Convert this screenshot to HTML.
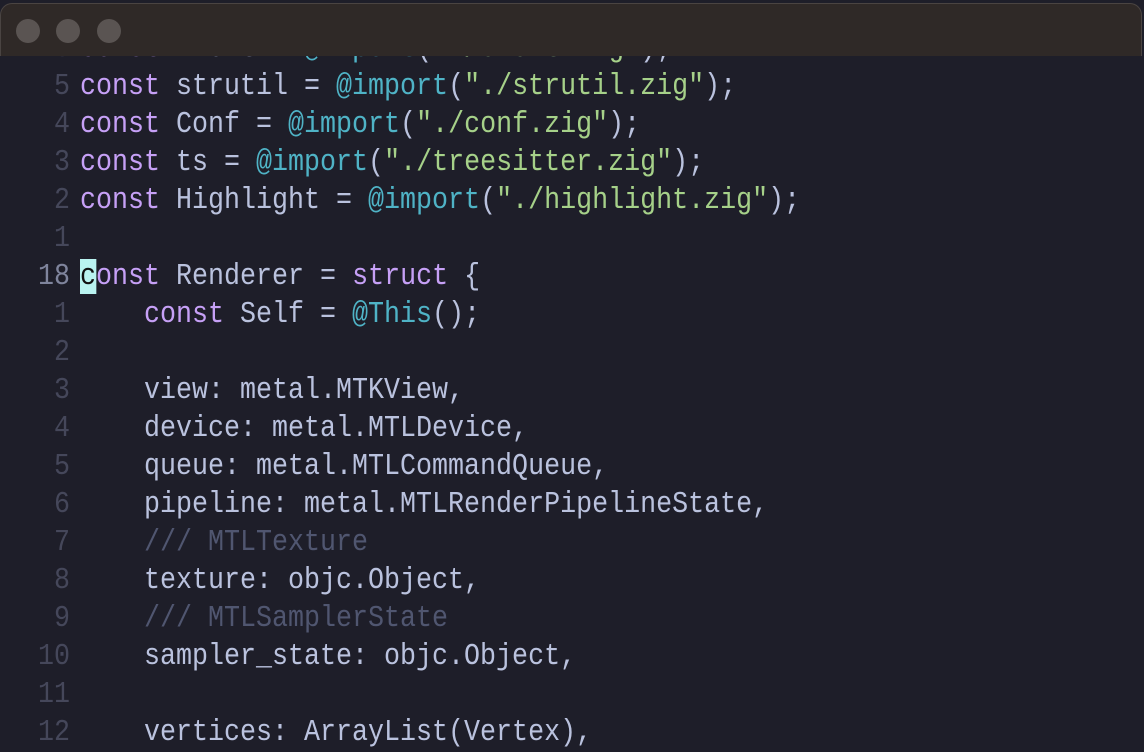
<!DOCTYPE html>
<html><head><meta charset="utf-8"><style>
html,body{margin:0;padding:0;width:1144px;height:744px;overflow:hidden;background:#1e1e29;}
pre{position:absolute;left:0;top:30px;margin:0;font-family:"Liberation Mono",monospace;font-size:31px;line-height:38px;color:#bac2de;white-space:pre;transform:scaleX(0.8602);transform-origin:0 0;}
.n{display:inline-block;width:4.375ch;text-align:right;color:#45475a;margin-right:0.625ch;}
.cn{color:#7f849c;}
.k{color:#c6a0f6;}
.b{color:#4fb3c6;}
.s{color:#a6d189;}
.c{color:#505670;}
.cur{background:#b9f3f0;color:#111;}
.tb{position:absolute;left:0;top:3px;width:1142px;height:53px;background:#2f2927;border-radius:12px 12px 0 0;border:1px solid #4a4442;border-bottom:none;box-sizing:border-box;}
.d{position:absolute;top:15px;width:24px;height:24px;border-radius:50%;background:#5a5452;}
</style></head><body>
<pre><span class="n">6</span><span class="k">const</span> Event = <span class="b">@import</span>(<span class="s">"./event.zig"</span>);
<span class="n">5</span><span class="k">const</span> strutil = <span class="b">@import</span>(<span class="s">"./strutil.zig"</span>);
<span class="n">4</span><span class="k">const</span> Conf = <span class="b">@import</span>(<span class="s">"./conf.zig"</span>);
<span class="n">3</span><span class="k">const</span> ts = <span class="b">@import</span>(<span class="s">"./treesitter.zig"</span>);
<span class="n">2</span><span class="k">const</span> Highlight = <span class="b">@import</span>(<span class="s">"./highlight.zig"</span>);
<span class="n">1</span>
<span class="n cn">18</span><span class="cur">c</span><span class="k">onst</span> Renderer = <span class="k">struct</span> {
<span class="n">1</span>    <span class="k">const</span> Self = <span class="b">@This</span>();
<span class="n">2</span>
<span class="n">3</span>    view: metal.MTKView,
<span class="n">4</span>    device: metal.MTLDevice,
<span class="n">5</span>    queue: metal.MTLCommandQueue,
<span class="n">6</span>    pipeline: metal.MTLRenderPipelineState,
<span class="n">7</span>    <span class="c">/// MTLTexture</span>
<span class="n">8</span>    texture: objc.Object,
<span class="n">9</span>    <span class="c">/// MTLSamplerState</span>
<span class="n">10</span>    sampler_state: objc.Object,
<span class="n">11</span>
<span class="n">12</span>    vertices: ArrayList(Vertex),
</pre>
<div class="tb"><div class="d" style="left:15px"></div><div class="d" style="left:55px"></div><div class="d" style="left:96px"></div></div>
</body></html>
